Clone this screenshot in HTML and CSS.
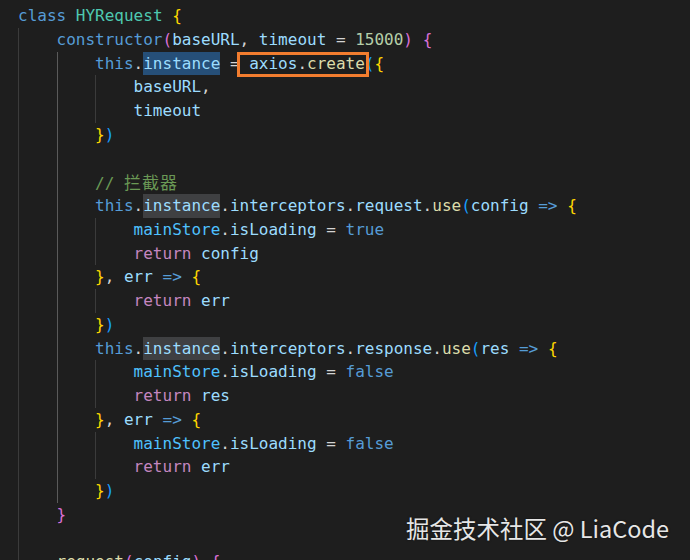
FILE: index.html
```html
<!DOCTYPE html>
<html>
<head>
<meta charset="utf-8">
<link rel="stylesheet" href="styles.css">
</head>
<body>
<div class="editor">
  <div class="ln"><span class="code"><span class="k">class</span> <span class="t">HYRequest</span> <span class="b1">{</span></span></div>
  <div class="ln"><i class="g"></i><span class="code"><span class="k">constructor</span><span class="b2">(</span><span class="v">baseURL</span>, <span class="v">timeout</span> = <span class="n">15000</span><span class="b2">)</span> <span class="b2">{</span></span></div>
  <div class="ln"><i class="g"></i><i class="g a"></i><span class="code"><span class="k">this</span>.<span class="v hl">instance</span> = <span class="mark"><span class="v">axios</span>.<span class="f">create</span></span><span class="b3">(</span><span class="b1">{</span></span></div>
  <div class="ln"><i class="g"></i><i class="g a"></i><i class="g"></i><span class="code"><span class="v">baseURL</span>,</span></div>
  <div class="ln"><i class="g"></i><i class="g a"></i><i class="g"></i><span class="code"><span class="v">timeout</span></span></div>
  <div class="ln"><i class="g"></i><i class="g a"></i><span class="code"><span class="b1">}</span><span class="b3">)</span></span></div>
  <div class="ln"><i class="g"></i><i class="g a"></i><span class="code"> </span></div>
  <div class="ln"><i class="g"></i><i class="g a"></i><span class="code"><span class="cm">// <span class="cjk">拦截器</span></span></span></div>
  <div class="ln"><i class="g"></i><i class="g a"></i><span class="code"><span class="k">this</span>.<span class="v hl2">instance</span>.<span class="v">interceptors</span>.<span class="v">request</span>.<span class="f">use</span><span class="b3">(</span><span class="v">config</span> <span class="k">=&gt;</span> <span class="b1">{</span></span></div>
  <div class="ln"><i class="g"></i><i class="g a"></i><i class="g"></i><span class="code"><span class="c">mainStore</span>.<span class="v">isLoading</span> = <span class="k">true</span></span></div>
  <div class="ln"><i class="g"></i><i class="g a"></i><i class="g"></i><span class="code"><span class="r">return</span> <span class="v">config</span></span></div>
  <div class="ln"><i class="g"></i><i class="g a"></i><span class="code"><span class="b1">}</span>, <span class="v">err</span> <span class="k">=&gt;</span> <span class="b1">{</span></span></div>
  <div class="ln"><i class="g"></i><i class="g a"></i><i class="g"></i><span class="code"><span class="r">return</span> <span class="v">err</span></span></div>
  <div class="ln"><i class="g"></i><i class="g a"></i><span class="code"><span class="b1">}</span><span class="b3">)</span></span></div>
  <div class="ln"><i class="g"></i><i class="g a"></i><span class="code"><span class="k">this</span>.<span class="v hl2">instance</span>.<span class="v">interceptors</span>.<span class="v">response</span>.<span class="f">use</span><span class="b3">(</span><span class="v">res</span> <span class="k">=&gt;</span> <span class="b1">{</span></span></div>
  <div class="ln"><i class="g"></i><i class="g a"></i><i class="g"></i><span class="code"><span class="c">mainStore</span>.<span class="v">isLoading</span> = <span class="k">false</span></span></div>
  <div class="ln"><i class="g"></i><i class="g a"></i><i class="g"></i><span class="code"><span class="r">return</span> <span class="v">res</span></span></div>
  <div class="ln"><i class="g"></i><i class="g a"></i><span class="code"><span class="b1">}</span>, <span class="v">err</span> <span class="k">=&gt;</span> <span class="b1">{</span></span></div>
  <div class="ln"><i class="g"></i><i class="g a"></i><i class="g"></i><span class="code"><span class="c">mainStore</span>.<span class="v">isLoading</span> = <span class="k">false</span></span></div>
  <div class="ln"><i class="g"></i><i class="g a"></i><i class="g"></i><span class="code"><span class="r">return</span> <span class="v">err</span></span></div>
  <div class="ln"><i class="g"></i><i class="g a"></i><span class="code"><span class="b1">}</span><span class="b3">)</span></span></div>
  <div class="ln"><i class="g"></i><span class="code"><span class="b2">}</span></span></div>
  <div class="ln"><i class="g"></i><span class="code"> </span></div>
  <div class="ln"><i class="g"></i><span class="code"><span class="f">request</span><span class="b2">(</span><span class="v">config</span><span class="b2">)</span> <span class="b2">{</span></span></div>
</div>
<div class="watermark">掘金技术社区 @ LiaCode</div>
</body>
</html>
```
FILE: styles.css
```css
html, body {
  margin: 0;
  padding: 0;
  background: #1e1e1e;
  overflow: hidden;
  width: 690px;
  height: 560px;
}
.editor {
  padding: 4px 0 0 18px;
  font-family: "DejaVu Sans Mono", "Noto Sans CJK SC", monospace;
  font-size: 16px;
  color: #d4d4d4;
}
.ln {
  display: flex;
  height: 23.76px;
  line-height: 23.76px;
  white-space: pre;
}
.g {
  flex: none;
  width: 4ch;
  background: linear-gradient(#3b3b3b, #3b3b3b) left top / 1px 100% no-repeat;
}
.g.a {
  background: linear-gradient(#5a5a5a, #5a5a5a) left top / 1px 100% no-repeat;
}
.code { flex: none; }
.k { color: #569cd6; }
.t { color: #4ec9b0; }
.v { color: #9cdcfe; }
.c { color: #4fc1ff; }
.f { color: #dcdcaa; }
.n { color: #b5cea8; }
.r { color: #c586c0; }
.cm { color: #6a9955; }
.cjk { font-family: "Noto Sans CJK SC", sans-serif; font-size: 17px; letter-spacing: 1px; }
.b1 { color: #ffd700; }
.b2 { color: #da70d6; }
.b3 { color: #179fff; }
.hl {
  display: inline-block;
  background: #264f78;
}
.hl2 {
  display: inline-block;
  background: #3f4042;
}
.mark {
  display: inline-block;
  position: relative;
}
.mark::after {
  content: "";
  position: absolute;
  left: -12px;
  right: -4px;
  top: 0;
  bottom: -2px;
  border: 3px solid #f27d2f;
}
.watermark {
  position: absolute;
  left: 406px;
  top: 511px;
  font-family: "Noto Sans CJK SC", "Noto Sans", sans-serif;
  font-size: 23.5px;
  line-height: 34px;
  color: #e6e6e6;
  text-shadow: 0 0 2px rgba(0,0,0,0.6);
}
```
